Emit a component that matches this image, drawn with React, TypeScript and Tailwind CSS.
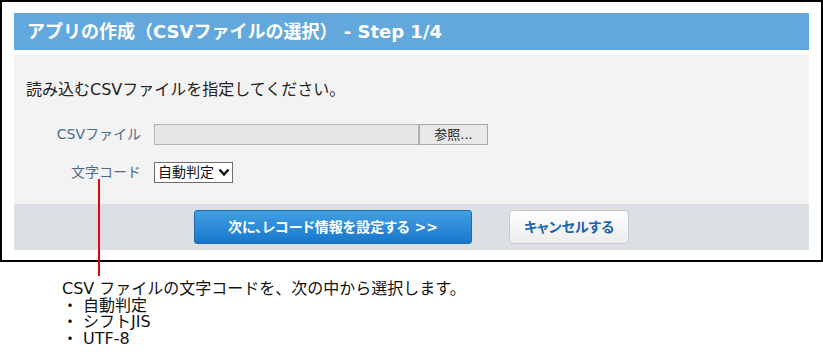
import React from "react";

const FONT = '"DejaVu Sans", "Noto Sans CJK JP", sans-serif';

function Chevron() {
  return (
    <svg width="12" height="9" viewBox="0 0 12 9" className="ml-[4px]">
      <polyline points="1.5,1.5 6,6.5 10.5,1.5" fill="none" stroke="#111" strokeWidth="2.4" />
    </svg>
  );
}

export default function App() {
  return (
    <div className="relative w-[823px] h-[352px] bg-white text-black overflow-hidden" style={{ fontFamily: FONT }}>
      {/* Dialog capture */}
      <div className="h-[262px] border-2 border-black px-[12px] pt-[11px]">
        <div className="h-[37px] bg-[#63a8dd] flex items-center pl-[13px]">
          <h1 className="text-[18px] font-bold text-white leading-none">
            アプリの作成（CSVファイルの選択） - Step 1/4
          </h1>
        </div>

        <div className="mt-[5px] bg-[#f3f3f3] pt-[25px] pb-[20px]">
          <p className="pl-[12px] text-[16px] leading-[20px] text-[#222]">
            読み込むCSVファイルを指定してください。
          </p>

          <div className="mt-[24px] grid grid-cols-[127px_1fr] gap-x-[13px] gap-y-[15px] items-center">
            <span className="text-right text-[14px] leading-[21px] text-[#4f6b89]">CSVファイル</span>
            <div className="flex h-[21px]">
              <div className="w-[265px] h-full bg-[#e6e6e6] border border-[#b4b4b4]" />
              <button className="w-[69px] h-full bg-[#e8e8e8] border border-[#a9a9a9] text-[13px] leading-none text-[#222]">
                参照...
              </button>
            </div>

            <span className="text-right text-[14px] leading-[21px] text-[#4f6b89]">文字コード</span>
            <div>
              <div className="inline-flex items-center h-[21px] w-[79px] bg-white border border-[#6e6e6e] pl-[3px] text-[14px] leading-none text-[#111]">
                自動判定
                <Chevron />
              </div>
            </div>
          </div>
        </div>

        <div className="h-[46px] bg-[#dcdfe3] flex items-center justify-center gap-[37px]">
          <button className="w-[278px] h-[34px] rounded-[3px] border border-[#1e6db3] bg-gradient-to-b from-[#42a0e4] to-[#1677cb] text-white text-[14px] font-bold [font-feature-settings:'palt']">
            次に、レコード情報を設定する &gt;&gt;
          </button>
          <button className="w-[120px] h-[34px] rounded-[4px] border border-[#c9c9c9] bg-gradient-to-b from-white to-[#ececec] text-[#1a64b0] text-[14px] font-bold [font-feature-settings:'palt']">
            キャンセルする
          </button>
        </div>
      </div>

      {/* Callout line */}
      <div className="absolute left-[98px] top-[179px] w-[2px] h-[97px] bg-[#e60012]" />

      {/* Callout text */}
      <div className="pl-[62px] pt-[19px] text-[16px] leading-[16.7px] text-[#111]">
        <p>CSV ファイルの文字コードを、次の中から選択します。</p>
        <p>・ 自動判定</p>
        <p>・ シフトJIS</p>
        <p>・ UTF-8</p>
      </div>
    </div>
  );
}
